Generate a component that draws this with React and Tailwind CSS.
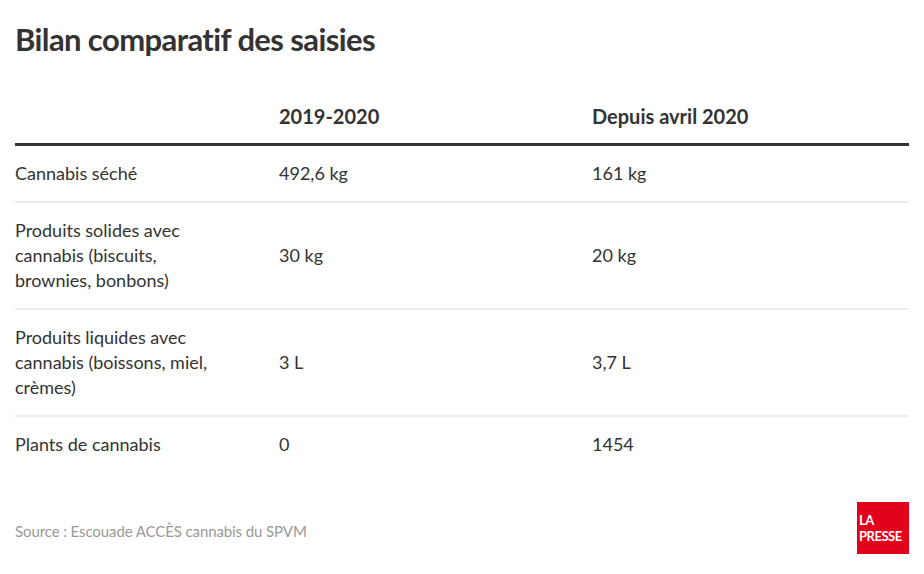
const rows = [
  { label: "Cannabis séché", a: "492,6 kg", b: "161 kg" },
  { label: "Produits solides avec cannabis (biscuits, brownies, bonbons)", a: "30 kg", b: "20 kg" },
  { label: "Produits liquides avec cannabis (boissons, miel, crèmes)", a: "3 L", b: "3,7 L" },
  { label: "Plants de cannabis", a: "0", b: "1454" },
];

export default function App() {
  return (
    <div className="w-[924px] h-[574px] bg-white px-[15px] text-[#333] font-['Lato','Open_Sans',sans-serif] flex flex-col">
      <h1 className="mt-[19px] text-[31px] leading-[40px] font-bold tracking-[-0.6px]">Bilan comparatif des saisies</h1>

      <table className="mt-[45px] w-full border-collapse text-[18px] leading-[25px]">
        <thead>
          <tr className="border-b-[3px] border-[#333]">
            <th className="w-[264px]"></th>
            <th className="w-[313px] text-left font-bold text-[20px] pb-3.5">2019-2020</th>
            <th className="text-left font-bold text-[20px] pb-3.5">Depuis avril 2020</th>
          </tr>
        </thead>
        <tbody>
          {rows.map((r, i) => (
            <tr key={i} className={i < rows.length - 1 ? "border-b-2 border-[#ededed]" : ""}>
              <td className="py-[15px] align-middle">
                <div className="w-[215px]">{r.label}</div>
              </td>
              <td className="py-[15px] align-middle">{r.a}</td>
              <td className="py-[15px] align-middle">{r.b}</td>
            </tr>
          ))}
        </tbody>
      </table>

      <div className="mt-auto mb-[20px] flex items-center justify-between">
        <p className="pt-[6px] text-[15px] tracking-[-0.1px] text-[#999]">Source : Escouade ACCÈS cannabis du SPVM</p>
        <div className="w-[52px] h-[52px] bg-[#e2001a] flex flex-col justify-center pl-[2px] text-white font-bold text-[13px] leading-[16px] tracking-[-0.5px]">
          <span>LA</span>
          <span>PRESSE</span>
        </div>
      </div>
    </div>
  );
}
